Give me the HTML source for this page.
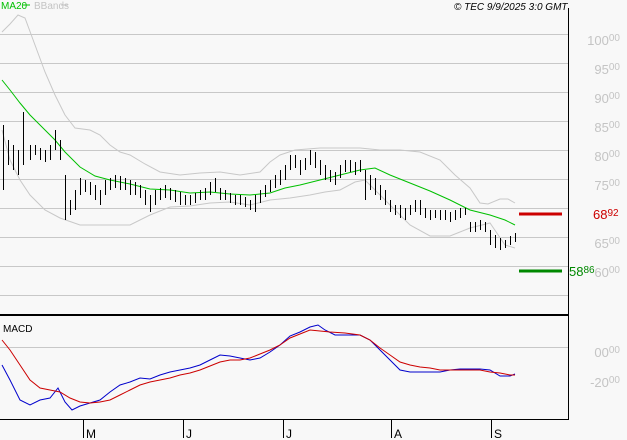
<!DOCTYPE html><html><head><style>body{margin:0;background:#f8f8f8;width:627px;height:440px;overflow:hidden}svg{display:block}text{font-family:"Liberation Sans",sans-serif}</style></head><body>
<svg width="627" height="440" viewBox="0 0 627 440">
<rect width="627" height="440" fill="#f8f8f8"/>
<g stroke="#c8c8c8" stroke-width="1">
<path d="M0 34.5H568M0 63.5H568M0 92.5H568M0 121.5H568M0 150.5H568M0 179.5H568M0 208.5H568M0 237.5H568M0 266.5H568M0 295.5H568M0 347.5H568"/>
</g>
<polyline fill="none" stroke="#c8c8c8" points="2,32 10,24 18,15 25,18 35,45 45,72 55,95 65,115 75,128 90,130 100,135 110,145 120,152 130,155 145,164 160,172 180,175 200,173 220,172 240,175 260,172 270,162 280,155 295,150 320,148 340,148 360,148 380,150 400,150 420,152 440,160 455,175 470,188 480,203 488,204 500,199 508,199 515,203"/>
<polyline fill="none" stroke="#c8c8c8" points="2,130 10,160 20,180 30,195 45,210 60,218 80,225 100,225 130,225 150,215 170,207 190,206 210,203 230,202 250,205 270,200 290,198 310,195 325,192 340,190 355,182 365,180 380,195 395,210 410,225 430,236 450,236 470,228 490,223 505,245 515,248"/>
<polyline fill="none" stroke="#00c000" points="2,80 10,90 20,103 30,115 45,130 55,140 65,152 80,167 95,176 110,180 130,184 150,189 170,190 190,193 210,192 230,194 250,195 270,193 285,188 300,185 320,180 340,175 360,170 375,168 390,175 410,183 430,191 450,200 470,210 490,215 505,220 515,225"/>
<path stroke="#000" stroke-width="1" fill="none" d="M3.5 125V190M8.5 140V165M13.5 145V170M18.5 150V175M23.5 112V165M30.5 145V160M35.5 145V155M40.5 148V160M45.5 150V162M50.5 145V160M55.5 130V150M60.5 140V160M65.5 175V220M70.5 200V215M75.5 190V210M80.5 178V195M85.5 180V192M90.5 182V195M95.5 185V200M100.5 190V205M105.5 180V195M110.5 178V190M115.5 175V188M120.5 176V190M125.5 178V190M130.5 180V195M135.5 182V195M140.5 185V198M145.5 190V205M150.5 195V212M155.5 190V205M160.5 188V200M165.5 185V198M170.5 188V200M175.5 190V202M180.5 192V205M185.5 195V205M190.5 195V205M195.5 193V203M200.5 190V200M205.5 188V200M210.5 182V195M215.5 178V192M220.5 188V200M225.5 190V200M230.5 193V203M235.5 195V205M240.5 195V205M245.5 197V207M250.5 200V210M255.5 195V212M260.5 190V203M265.5 185V197M270.5 180V192M275.5 175V188M280.5 170V185M285.5 165V180M290.5 155V170M295.5 155V168M300.5 160V175M305.5 158V170M310.5 150V165M315.5 152V168M320.5 160V175M325.5 165V180M330.5 170V182M335.5 172V185M340.5 165V178M345.5 160V172M350.5 160V172M355.5 162V175M360.5 160V172M365.5 170V200M370.5 175V190M375.5 178V195M380.5 185V200M385.5 190V205M390.5 200V212M395.5 205V215M400.5 205V218M405.5 208V220M410.5 205V215M415.5 200V212M420.5 200V215M425.5 208V218M430.5 210V220M435.5 210V218M440.5 210V220M445.5 210V220M450.5 212V222M455.5 210V220M460.5 208V218M465.5 208V215M470.5 222V232M475.5 222V232M480.5 220V230M485.5 222V232M490.5 230V245M495.5 235V248M500.5 238V250M505.5 240V248M510.5 236V245M515.5 233V242"/>
<path stroke="#cc0000" stroke-width="3" d="M519 214H562"/>
<path stroke="#008800" stroke-width="3" d="M519 271H562"/>
<polyline fill="none" stroke="#0000cc" points="2,365 10,380 20,400 30,405 40,400 50,398 58,388 65,402 72,410 80,406 90,403 100,400 110,392 120,385 130,382 140,378 150,379 160,375 170,372 180,370 190,368 200,365 210,360 220,355 230,356 240,358 250,360 255,359 260,358 270,352 280,345 290,336 300,332 310,327 318,325 325,330 335,335 345,335 360,335 370,340 380,350 390,360 400,370 410,372 420,372 430,372 440,372 450,370 460,369 470,369 480,369 490,370 500,376 510,376 515,374"/>
<polyline fill="none" stroke="#cc0000" points="2,340 10,350 20,365 30,380 40,388 50,390 60,392 70,398 80,402 90,403 100,402 110,400 120,395 130,390 140,385 150,382 160,380 170,378 180,375 190,373 200,370 210,366 220,362 230,360 240,360 250,358 260,354 270,350 280,345 290,338 300,334 310,330 320,331 330,332 345,333 360,335 370,340 380,348 390,355 400,362 410,365 420,367 430,368 440,370 450,370 460,370 470,370 480,370 490,372 500,373 510,375 515,375"/>
<path stroke="#000" stroke-width="1" fill="none" d="M568.5 8V419M0 419.5H569M83.5 419V438M183.5 419V438M283.5 419V438M391.5 419V438M491.5 419V438"/>
<path stroke="#000" stroke-width="2" d="M0 315H569"/>
<g font-size="12" fill="#000"><text x="86" y="438">M</text><text x="186" y="438">J</text><text x="286" y="438">J</text><text x="394" y="438">A</text><text x="494" y="438">S</text>
<text x="3" y="332" font-size="10">MACD</text>
<text x="454" y="10" font-size="10" font-style="italic">© TEC 9/9/2025 3:0 GMT</text></g>
<text x="1" y="9" font-size="10" fill="#00c000">MA20</text><path d="M23 5H30" stroke="#00c000"/>
<text x="34" y="9" font-size="10" fill="#c4c4c4">BBands</text><path d="M61 5H68" stroke="#c4c4c4"/>
<g font-size="13" fill="#c4c4c4" text-anchor="end">
<text x="620" y="45">100<tspan font-size="10" dy="-4">00</tspan></text>
<text x="620" y="74">95<tspan font-size="10" dy="-4">00</tspan></text>
<text x="620" y="103">90<tspan font-size="10" dy="-4">00</tspan></text>
<text x="620" y="132">85<tspan font-size="10" dy="-4">00</tspan></text>
<text x="620" y="161">80<tspan font-size="10" dy="-4">00</tspan></text>
<text x="620" y="190">75<tspan font-size="10" dy="-4">00</tspan></text>
<text x="620" y="219">70<tspan font-size="10" dy="-4">00</tspan></text>
<text x="620" y="248">65<tspan font-size="10" dy="-4">00</tspan></text>
<text x="620" y="277">60<tspan font-size="10" dy="-4">00</tspan></text>
<text x="620" y="357">00<tspan font-size="10" dy="-4">00</tspan></text>
<text x="620" y="387">-20<tspan font-size="10" dy="-4">00</tspan></text>
</g>
<rect x="592" y="205" width="28" height="16" fill="#f8f8f8"/>
<text x="593" y="219" font-size="13" fill="#cc0000">68<tspan font-size="10" dy="-3">92</tspan></text>
<text x="569" y="276" font-size="13" fill="#008800">58<tspan font-size="10" dy="-3">86</tspan></text>
</svg></body></html>
